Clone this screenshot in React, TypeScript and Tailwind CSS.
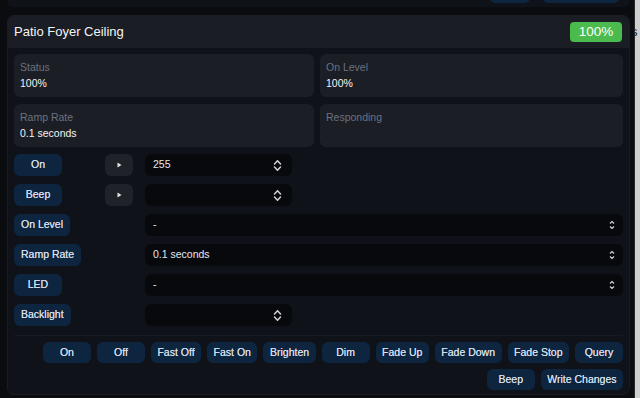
import React from "react";

const font = { fontFamily: '"Liberation Sans", Arial, sans-serif' };

function UpDown({ small = false }: { small?: boolean }) {
  if (small) {
    return (
      <svg width="6" height="12" viewBox="0 0 6 12" fill="none" stroke="#d1d5db" strokeWidth="1.2">
        <path d="M1 4.5 L3 2.5 L5 4.5" />
        <path d="M1 7.5 L3 9.5 L5 7.5" />
      </svg>
    );
  }
  return (
    <svg width="9" height="13" viewBox="0 0 9 13" fill="none" stroke="#d1d5db" strokeWidth="1.5" strokeLinecap="round" strokeLinejoin="round">
      <path d="M1.5 5 L4.5 1.8 L7.5 5" />
      <path d="M1.5 8 L4.5 11.2 L7.5 8" />
    </svg>
  );
}

function Btn({ label, className = "" }: { label: string; className?: string }) {
  return (
    <button
      className={`min-w-[48px] rounded-[6px] bg-[#0e2540] text-[10.5px] text-[#d3dce7] [text-shadow:0_0_0.4px_#d3dce7] ${className}`}
    >
      {label}
    </button>
  );
}

function Play() {
  return (
    <div className="flex h-[22px] w-[28px] items-center justify-center rounded-[6px] bg-[#1f2229]">
      <svg width="5" height="6" viewBox="0 0 5 6">
        <path d="M0.5 0.5 L4.5 3 L0.5 5.5 Z" fill="#e5e7eb" />
      </svg>
    </div>
  );
}

function Select({ value = "", wide = false }: { value?: string; wide?: boolean }) {
  return (
    <div
      className={`flex h-[22px] items-center justify-between rounded-[6px] bg-[#07090c] pl-[8px] ${
        wide ? "flex-1 pr-[8px]" : "w-[147px] pr-[10px]"
      }`}
    >
      <span className="text-[10.5px] text-[#e5e7eb]">{value}</span>
      <UpDown small={wide} />
    </div>
  );
}

function InfoBox({ label, value }: { label: string; value?: string }) {
  return (
    <div className="flex h-[43px] flex-col rounded-[6px] bg-[#1b1e25] px-[6px] pt-[6px]">
      <span className="text-[10.5px] leading-[14px] text-[#6b7280]">{label}</span>
      {value && <span className="mt-[2px] text-[10.5px] leading-[14px] text-[#f3f4f6]">{value}</span>}
    </div>
  );
}

type Row = { label: string; play?: boolean; value?: string; wide?: boolean };

const rows: Row[] = [
  { label: "On", play: true, value: "255" },
  { label: "Beep", play: true, value: "" },
  { label: "On Level", value: "-", wide: true },
  { label: "Ramp Rate", value: "0.1 seconds", wide: true },
  { label: "LED", value: "-", wide: true },
  { label: "Backlight", value: "" },
];

const actions = ["On", "Off", "Fast Off", "Fast On", "Brighten", "Dim", "Fade Up", "Fade Down", "Fade Stop", "Query"];

export default function App() {
  return (
    <div className="flex h-[398px] w-[640px] overflow-hidden bg-[#0a0c10]" style={font}>
      <div className="flex w-[634px] flex-col pl-[7px] pr-[4px]">
        {/* previous card tail */}
        <div className="flex h-[7px] items-end justify-end gap-[13px] overflow-hidden rounded-b-[6px] bg-[#0f1218] pb-[4px] pr-[11px]">
          <div className="h-[20px] w-[40px] shrink-0 rounded-[5px] bg-[#0e2540]" />
          <div className="h-[20px] w-[76px] shrink-0 rounded-[5px] bg-[#0e2540]" />
        </div>

        <div className="mt-[8px] flex h-[380px] flex-col overflow-hidden rounded-[7px] border border-[#191c22] bg-[#0f1218]">
          <div className="flex h-[32px] items-center justify-between bg-[#1a1d24] pl-[6px] pr-[7px]">
            <span className="text-[13px] text-[#f3f4f6]">Patio Foyer Ceiling</span>
            <span className="flex h-[20px] w-[52px] items-center justify-center rounded-[4px] bg-[#4cbb4e] text-[13.5px] text-white">
              100%
            </span>
          </div>

          <div className="flex flex-col px-[6px] pt-[6px]">
            <div className="grid grid-cols-[300px_1fr] gap-x-[6px] gap-y-[7px]">
              <InfoBox label="Status" value="100%" />
              <InfoBox label="On Level" value="100%" />
              <InfoBox label="Ramp Rate" value="0.1 seconds" />
              <InfoBox label="Responding" />
            </div>

            <div className="mt-[7px] flex flex-col gap-[8px]">
              {rows.map((r) => (
                <div key={r.label} className="flex h-[22px] items-stretch">
                  <div className="flex w-[91px] shrink-0">
                    <Btn label={r.label} className="h-[22px] px-[7px]" />
                  </div>
                  <div className="w-[40px] shrink-0">{r.play && <Play />}</div>
                  <Select value={r.value} wide={r.wide} />
                </div>
              ))}
            </div>

            <div className="mt-[9px] border-t border-[#171a20] pt-[6px]">
              <div className="flex justify-end gap-[6px]">
                {actions.map((a) => (
                  <Btn key={a} label={a} className="h-[21px] px-[6.5px]" />
                ))}
              </div>
              <div className="mt-[6px] flex justify-end gap-[6px]">
                <Btn label="Beep" className="h-[21px] px-[6.5px]" />
                <Btn label="Write Changes" className="h-[21px] px-[6.5px]" />
              </div>
            </div>
          </div>
        </div>
      </div>
      <div className="flex-1 overflow-hidden border-l border-[#2a2a2a] bg-[#cfcfcf] pt-[22px]">
        <span className="-ml-[4px] block text-[13px] text-[#222]">s</span>
      </div>
    </div>
  );
}
